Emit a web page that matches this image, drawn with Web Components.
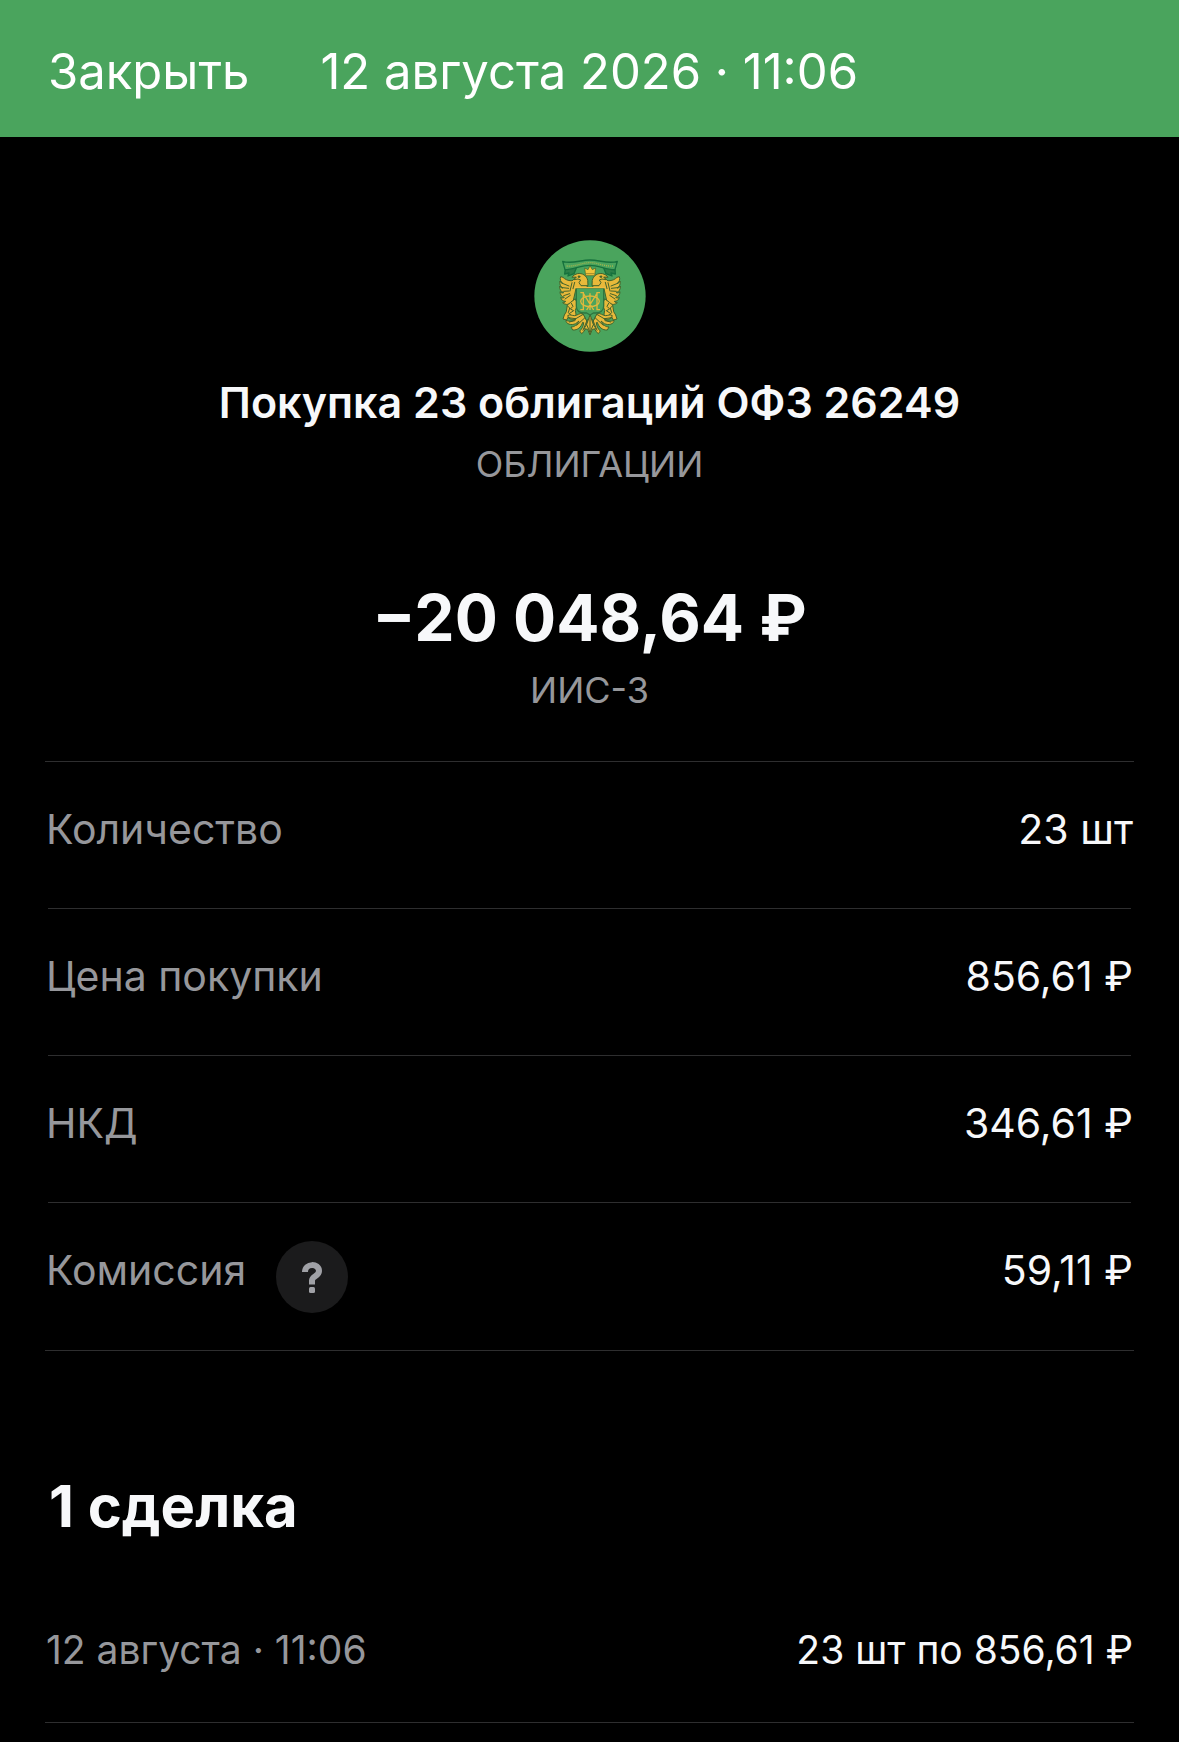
<!DOCTYPE html>
<html lang="ru">
<head>
<meta charset="utf-8">
<meta name="viewport" content="width=device-width, initial-scale=1">
<title>Покупка 23 облигаций ОФЗ 26249</title>
<style>
  body { margin: 0; background: #000; color: #f7f8fa; font-family: Inter, "Liberation Sans", sans-serif; }
</style>
</head>
<body>
<deal-page>
  <deal-header>12 августа 2026 · 11:06</deal-header>
  <deal-hero>
    <issuer-emblem slot="logo"></issuer-emblem>
    <span slot="title">Покупка 23 облигаций ОФЗ 26249</span>
    <span slot="kind">ОБЛИГАЦИИ</span>
    <span slot="amount">−20 048,64 ₽</span>
    <span slot="account">ИИС-3</span>
  </deal-hero>
  <detail-list>
    <detail-row><span slot="label">Количество</span>23 шт</detail-row>
    <detail-row><span slot="label">Цена покупки</span>856,61 ₽</detail-row>
    <detail-row><span slot="label">НКД</span>346,61 ₽</detail-row>
    <detail-row><span slot="label">Комиссия</span><help-button slot="help"></help-button>59,11 ₽</detail-row>
  </detail-list>
  <trade-list>
    <span slot="title">1 сделка</span>
    <trade-row><span slot="time">12 августа · 11:06</span>23 шт по 856,61 ₽</trade-row>
  </trade-list>
</deal-page>

<script>
const define = (name, markup) => customElements.define(name, class extends HTMLElement {
  constructor() {
    super();
    this.attachShadow({ mode: 'open' }).innerHTML = markup;
  }
});

define('deal-page', `
<style>
  :host { display: block; --muted: #96979b; --line: #2e2e2f; --green: #4aa45d; }
</style>
<slot></slot>`);

define('deal-header', `
<style>
  :host { display: flex; align-items: center; gap: 71px; padding: 43px 48px 36px; background: var(--green); color: #fff; font-size: 49px; line-height: 58px; }
  button { all: unset; cursor: pointer; }
  h1 { margin: 0; font: inherit; }
</style>
<button type="button">Закрыть</button>
<h1><slot></slot></h1>`);

define('deal-hero', `
<style>
  :host { display: flex; flex-direction: column; align-items: center; padding: 103px 45px 50px; text-align: center; }
  h2, p { margin: 0; }
  h2 { margin-top: 26px; font-size: 43px; line-height: 48px; font-weight: 600; }
  p { color: var(--muted); font-size: 36px; line-height: 42px; }
  .kind { margin-top: 17px; }
  .amount { margin-top: 94px; color: inherit; font-size: 64px; line-height: 78px; font-weight: 700; }
  .account { margin-top: 12px; }
</style>
<slot name="logo"></slot>
<h2><slot name="title"></slot></h2>
<p class="kind"><slot name="kind"></slot></p>
<p class="amount"><slot name="amount"></slot></p>
<p class="account"><slot name="account"></slot></p>`);

define('issuer-emblem', `
<style>
  :host { display: block; width: 112px; height: 112px; }
  svg { display: block; width: 100%; height: 100%; }
</style>
<svg viewBox="27 30 336 336" aria-hidden="true">
  <defs>
    <g id="wing">
      <path d="M188 172c-8-16-19-28-37-30-4 6-7 12-16 10-8-1-15-4-21-10l-7-2c-3 8 0 15 6 20-5-1-7-4-8-7-2 10 1 17 9 21-5 0-8-3-10-6-1 10 4 17 12 20-5 2-8 0-11-3 0 9 5 15 13 17-4 3-7 2-11 0 2 8 7 12 15 12-3 4-5 4-9 4 7 6 14 7 22 3l10-10 8-35z"/>
      <path fill="none" d="M112 160l20 8M113 173l18 2M116 184l16-1M116 197l18-6M120 207l16-11M141 158l-6 25M149 157l-5 19"/>
      <path d="M188 150c-3-13-16-22-31-19l-10 4-6 7 13-1-7 8 12-2 8 3-5 8 6 9h20z"/>
      <circle cx="162" cy="140" r="2.500" fill="#26602f"/>
      <path d="M150 207l-13 10-10 8-3 20-6 10-4 12 11 3 4-8 6 3 8-8 6 3 4-7-2-12 3-8 3-12z"/>
      <path fill="none" d="M139 220l5 9-8 8 10 5-12 8M129 229l5 5-4 14 7 7"/>
      <path d="M173 251c-11-3-15 6-25 6-7 0-13-5-20 0 4 11 16 14 25 9-7 9-22 9-30 5-1 11 16 16 29 10l10-8c-6 12-14 18-24 18l5 9c15 1 25-8 30-23l3 1c-1 12-5 19-12 25l6 8c10-7 15-20 16-35z"/>
      <path fill="none" d="M173 254l-22 13M180 263l-25 23M187 269l-13 32M130 263l21 3M133 276l17-4"/>
    </g>
  </defs>
  <circle cx="195" cy="198" r="167" fill="#4aa45d"/>
  <g stroke="#43632c" stroke-width="3" stroke-linejoin="round" stroke-linecap="round" fill="#e8b93a">
    <use href="#wing"/>
    <use href="#wing" transform="translate(390 0) scale(-1 1)"/>
    <path d="M195 255l-10 28-8 13 11 2 7 17 7-17 11-2-8-13z"/>
    <path d="M195 264v47M185 284l10 23 10-23" fill="none"/>
    <path d="M154 174h82v55c0 14-12 20-25 20h-6l-10 6-10-6h-6c-14 0-25-6-25-20z" fill="#4aa45d" stroke="#2e7540" stroke-width="4"/>
    <path d="M150 173h90" stroke="#f0bd43" stroke-width="4"/>
  </g>
  <g fill="none" stroke="#e0b83c" stroke-width="4">
    <path d="M166 188h9v51h-9M225 188h-9v51h9M175 190l31 50M216 190l-31 50M195 190v50"/>
    <ellipse cx="195" cy="214" rx="28" ry="16"/>
  </g>
  <g fill="#4aa45d" stroke="#16713d" stroke-width="4" stroke-linejoin="round">
    <path d="M121 117l-2 15 13-3-3 9 18-7 7-17M270 117l1 15-13-3 3 9-18-7-7-17" fill="#2c8048"/>
    <path d="M113 94c28 9 52-4 82-4s54 13 82 4l-7 25c-22 2-49-13-75-13s-53 13-75 13z"/>
  </g>
  <path d="M125 108c27 2 46-10 70-10s43 12 70 10" fill="none" stroke="#a9b34d" stroke-width="4" stroke-dasharray="3 3"/>
  <path d="M179 114l10 5 6-12 7 12 10-5-3 23h-27z" fill="#f2c33a" stroke="#43632c" stroke-width="2" stroke-linejoin="round"/>
  <path d="M183 131h25" stroke="#7c6a24" stroke-width="2"/>
</svg>`);

define('detail-list', `
<style>
  :host { display: block; margin: 0 45px; border: solid var(--line); border-width: 1px 0; }
</style>
<slot></slot>`);

define('detail-row', `
<style>
  :host { display: block; font-size: 41px; line-height: 48px; }
  .row { display: flex; justify-content: space-between; padding: 43px 1px 55px; }
  .label { display: flex; align-items: flex-start; gap: 30px; color: var(--muted); }
  .rule { height: 1px; margin: 0 3px; background: var(--line); }
  :host(:last-child) .rule { background: none; }
</style>
<div class="row">
  <div class="label"><slot name="label"></slot><slot name="help"></slot></div>
  <div><slot></slot></div>
</div>
<div class="rule"></div>`);

define('help-button', `
<style>
  :host { display: block; height: 48px; }
  button { display: grid; place-items: center; width: 72px; height: 72px; margin: -5px 0 0; padding: 0; border: 0; border-radius: 50%; background: #1b1b1c; color: #a0a1a6; cursor: pointer; }
  svg { width: 20px; height: 32px; }
</style>
<button type="button" aria-label="О комиссии">
  <svg viewBox="0 0 20 32" aria-hidden="true" fill="none" stroke="currentColor" stroke-width="6">
    <path d="M3 11C3 2 17 2 17 10c0 5.500-7 5-7 9.500V23.500"/>
    <rect x="7" y="26" width="6" height="6" rx="1.500" fill="currentColor" stroke="none"/>
  </svg>
</button>`);

define('trade-list', `
<style>
  :host { display: block; margin: 120px 45px 0; }
  h2 { margin: 0 4px 86px; font-size: 58px; line-height: 70px; font-weight: 700; }
</style>
<h2><slot name="title"></slot></h2>
<slot></slot>`);

define('trade-row', `
<style>
  :host { display: flex; justify-content: space-between; padding: 0 1px 49px; border-bottom: 1px solid var(--line); font-size: 39px; line-height: 46px; }
  .time { color: var(--muted); }
</style>
<div class="time"><slot name="time"></slot></div>
<div><slot></slot></div>`);
</script>
</body>
</html>
